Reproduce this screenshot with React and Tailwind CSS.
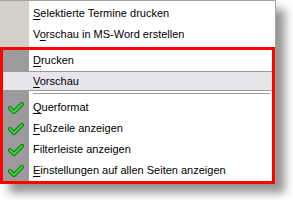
import React from 'react';

function Check() {
  return (
    <svg width="16" height="12" viewBox="0 0 16 12" className="block">
      <path d="M2 6 L6 10 L14 2" fill="none" stroke="#0a7a0a" strokeWidth="4" strokeLinecap="round" strokeLinejoin="round" />
      <path d="M2 6 L6 10 L14 2" fill="none" stroke="#3ad43a" strokeWidth="2.2" strokeLinecap="round" strokeLinejoin="round" />
    </svg>
  );
}

function Item({ pre, u, post, column, checked, active }) {
  return (
    <div
      className={
        'flex items-center ' +
        (active ? 'bg-[#e8e5ea] border-y border-[#9c9a9c] h-[20px]' : 'h-[21px]')
      }
    >
      <div
        className={
          'flex h-full shrink-0 items-center justify-center ' +
          (active ? 'w-[26px]' : column)
        }
      >
        {checked && <Check />}
      </div>
      <span className="pl-[4px] text-[11px] leading-none text-black">
        {pre}
        <span className="underline underline-offset-2">{u}</span>
        {post}
      </span>
    </div>
  );
}

const top = 'w-[29px] bg-[#d4d0c8]';
const dark = 'w-[26px] bg-[#9c9a9c]';

export default function App() {
  return (
    <div className="h-[200px] w-[293px] overflow-hidden bg-white font-['Liberation_Sans',Arial,sans-serif]">
      <div className="w-[276px] border-t border-r border-[#a8a49c] bg-white shadow-[9px_9px_9px_rgba(0,0,0,0.42)]">
        <div className="flex flex-col bg-[linear-gradient(to_right,#d4d0c8_29px,transparent_29px)] pt-[2px] pb-[2px]">
          <Item pre="" u="S" post="elektierte Termine drucken" column={top} />
          <Item pre="V" u="o" post="rschau in MS-Word erstellen" column={top} />
        </div>
        <div className="border-[3px] border-[#ff0000]">
          <Item pre="" u="D" post="rucken" column={dark} />
          <Item pre="" u="V" post="orschau" column={dark} active />
          <div className="flex h-[6px]">
            <div className="w-[26px] bg-[#9c9a9c]" />
            <div className="flex flex-1 items-center pl-[4px] pr-[2px]">
              <div className="h-[2px] w-full border-t border-b border-t-[#9c9a9c] border-b-white" />
            </div>
          </div>
          <Item pre="" u="Q" post="uerformat" column={dark} checked />
          <Item pre="" u="F" post="ußzeile anzeigen" column={dark} checked />
          <Item pre="Filterleiste anzeigen" u="" post="" column={dark} checked />
          <Item pre="" u="E" post="instellungen auf allen Seiten anzeigen" column={dark} checked />
        </div>
      </div>
    </div>
  );
}
